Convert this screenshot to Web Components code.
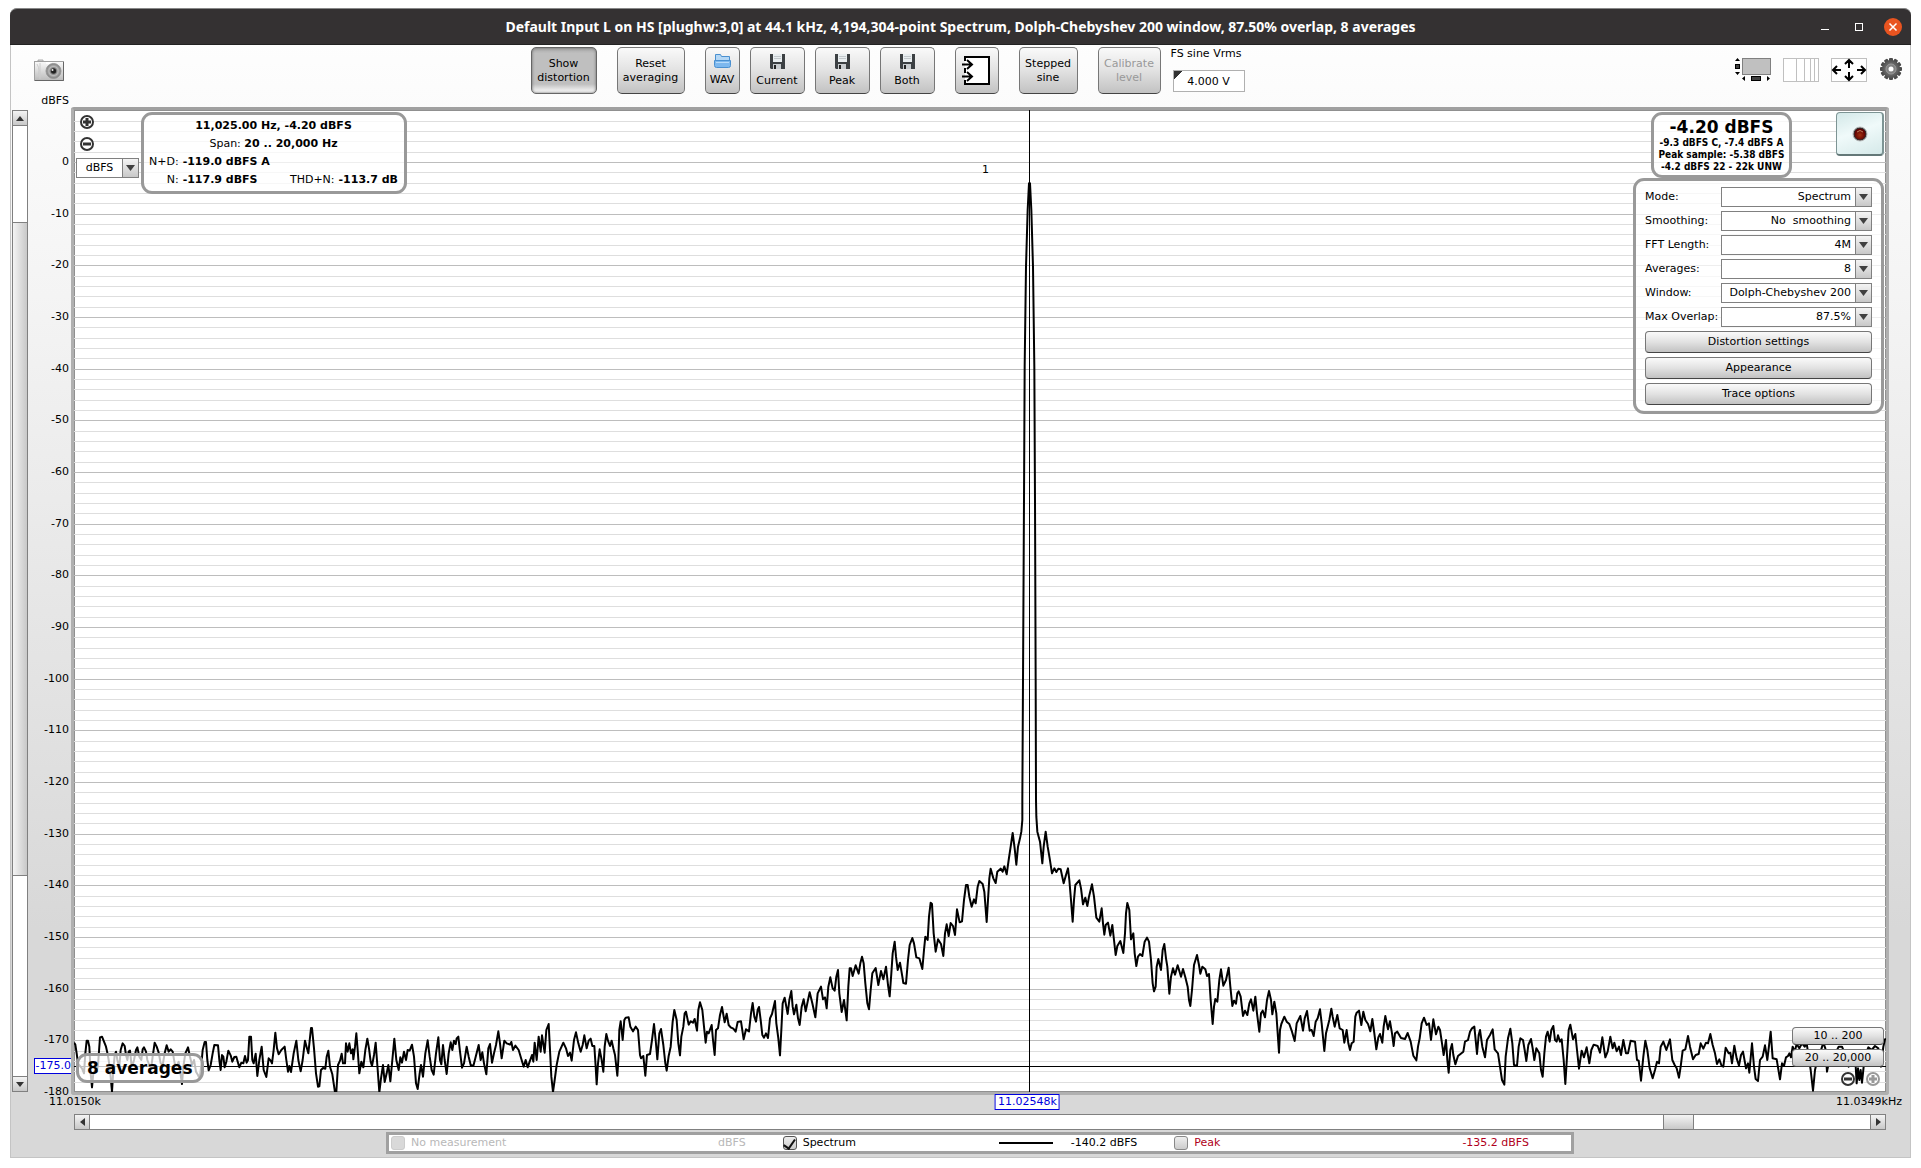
<!DOCTYPE html>
<html lang="en">
<head>
<meta charset="utf-8">
<title>Spectrum</title>
<style>
  html, body {
    margin: 0;
    height: 100%;
  }
  body {
    box-sizing: border-box;
    padding: 8px 10px 10px;
    background: #fff;
    color: #000;
    font: 11px/12px "DejaVu Sans", Verdana, sans-serif;
  }
</style>
</head>
<body>
<rta-window></rta-window>

<script>
// Rules that every shadow root needs
const BASE = `
  * { box-sizing: border-box; }
  :host { display: block; }
  button, select, input { font: inherit; color: inherit; margin: 0; }
  button { padding: 0; cursor: pointer; }
  svg { display: block; }
`;

const RAISED = `
  border: 1px solid #777;
  border-bottom-color: #444;
  background: linear-gradient(#fafafa, #e2e2e2 50%, #c2c2c2);
`;

class BaseElement extends HTMLElement {
  constructor() {
    super();
    this.attachShadow({ mode: "open" });
  }

  connectedCallback() {
    this.shadowRoot.innerHTML = `<style>${BASE}${this.styles()}</style>${this.markup()}`;
  }

  styles() { return ""; }
  markup() { return "<slot></slot>"; }
}

/* ---------- icons ---------- */

const gearTeeth = Array.from({ length: 12 }, (_, i) =>
  `<rect x="9" y="0" width="4" height="5" rx="1" transform="rotate(${i * 30} 11 11)"/>`).join("");

const ICONS = {
  camera: `<svg width="30" height="22" viewBox="0 0 30 22">
    <defs>
      <linearGradient id="cam" x1="0" y1="0" x2="0" y2="1"><stop offset="0" stop-color="#fafafa"/><stop offset="1" stop-color="#bbb"/></linearGradient>
      <radialGradient id="lens"><stop offset="0" stop-color="#222"/><stop offset=".3" stop-color="#555"/><stop offset=".6" stop-color="#bbb"/><stop offset="1" stop-color="#777"/></radialGradient>
    </defs>
    <path d="M4 2V1h5v2z" fill="#ddd" stroke="#aaa"/>
    <rect x=".5" y="2.5" width="29" height="19" fill="url(#cam)" stroke="#a0a0a0"/>
    <path d="M1 21.5H29.5V3" fill="none" stroke="#666"/>
    <path d="M3 5q4 7 0 13M6 4v16" fill="none" stroke="#ccc"/>
    <path d="M12 4h6" stroke="#fff" stroke-width="2"/>
    <circle cx="19.5" cy="12" r="7.5" fill="url(#lens)" stroke="#999"/>
    <circle cx="19.5" cy="12" r="2.5" fill="#222"/>
    <circle cx="18.5" cy="11" r="1" fill="#eee"/>
  </svg>`,
  folder: `<svg width="17" height="14" viewBox="0 0 17 14">
    <path d="M1.5 8V.5h5l1 2h8V8" fill="#b4d7f5" stroke="#4a90d0"/>
    <path d="M.5 6.5h16v5q0 2-2 2h-12q-2 0-2-2z" fill="#7db8ee" stroke="#4a90d0"/>
    <path d="M2 8.5h13" stroke="#b9dcfa"/>
  </svg>`,
  floppy: `<svg width="15" height="15" viewBox="0 0 15 15">
    <path d="M0 0h15v15H1l-1-1z" fill="#3c4043"/>
    <rect x="3" y="0" width="9" height="8" fill="#e9eef0"/>
    <path d="M4 2.5h7M4 4.5h7" stroke="#c2c8cc"/>
    <rect x="3" y="10" width="8" height="5" fill="#c9cdd0"/>
    <rect x="4" y="11" width="2" height="4" fill="#222"/>
  </svg>`,
  input: `<svg width="30" height="31" viewBox="0 0 30 31">
    <rect x="3" y="2" width="24" height="27" fill="#fff"/>
    <path d="M3 6V2h24v27H3v-4M3 13v5" fill="none" stroke="#000" stroke-width="2"/>
    <path d="M0 9.5h9M5 5l5 4.500L5 14M0 21.500h9M5 17l5 4.500L5 26" fill="none" stroke="#000" stroke-width="2"/>
  </svg>`,
  scrollbars: `<svg width="36" height="24" viewBox="0 0 36 24">
    <rect x="7.5" y=".5" width="28" height="16" fill="#c0c0c0" stroke="#808080"/>
    <path d="M0 3l2.500-3L5 3zM0 14l2.500 3L5 14zM10 18v5l-3-2.500zM32 18v5l3-2.500z"/>
    <rect x=".5" y="6.5" width="4" height="4" fill="#404040" stroke="#000"/>
    <rect x="16.5" y="18.5" width="9" height="4" fill="#404040" stroke="#000"/>
  </svg>`,
  grid: `<svg width="36" height="24" viewBox="0 0 36 24">
    <rect x=".5" y=".5" width="35" height="23" fill="#fff" stroke="#c0c0c0"/>
    <path d="M13.5 0v24M21.5 0v24M27.5 0v24M31.5 0v24" stroke="#c0c0c0"/>
  </svg>`,
  limits: `<svg width="36" height="24" viewBox="0 0 36 24">
    <rect x=".5" y=".5" width="35" height="23" fill="#fff" stroke="#c0c0c0"/>
    <path d="M10 12H3M6 8l-4 4 4 4M26 12h7M30 8l4 4-4 4M18 10V3M14 6l4-4 4 4M18 14v7M14 18l4 4 4-4" fill="none" stroke="#000" stroke-width="2"/>
  </svg>`,
  gear: `<svg width="23" height="22" viewBox="-1 0 23 22">
    <defs><radialGradient id="gear"><stop offset="0" stop-color="#aaa"/><stop offset=".6" stop-color="#6a6a6a"/><stop offset="1" stop-color="#555"/></radialGradient></defs>
    <g fill="#4c4c4c">${gearTeeth}</g>
    <circle cx="11" cy="11" r="8.5" fill="url(#gear)" stroke="#555"/>
    <circle cx="11" cy="11" r="5" fill="#808080" stroke="#999"/>
    <circle cx="11" cy="11" r="2.5" fill="#fff"/>
  </svg>`,
  plus: `<svg width="16" height="16" viewBox="0 0 16 16"><circle cx="8" cy="8" r="6" fill="#fff" stroke="currentColor" stroke-width="2"/><path d="M8 4v8M4 8h8" stroke="currentColor" stroke-width="3"/></svg>`,
  minus: `<svg width="16" height="16" viewBox="0 0 16 16"><circle cx="8" cy="8" r="6" fill="#fff" stroke="currentColor" stroke-width="2"/><path d="M4 8h8" stroke="currentColor" stroke-width="3"/></svg>`,
  up: `<svg width="8" height="5" viewBox="0 0 8 5"><path d="M0 5L4 0l4 5z" fill="#333"/></svg>`,
  down: `<svg width="8" height="5" viewBox="0 0 8 5"><path d="M0 0l4 5 4-5z" fill="#333"/></svg>`,
  left: `<svg width="5" height="8" viewBox="0 0 5 8"><path d="M5 0L0 4l5 4z" fill="#333"/></svg>`,
  right: `<svg width="5" height="8" viewBox="0 0 5 8"><path d="M0 0l5 4-5 4z" fill="#333"/></svg>`,
};

/* ---------- small controls ---------- */

// Icon without a frame, used on the toolbar and over the plot
class IconButton extends BaseElement {
  styles() {
    return `
      button { display: block; border: 0; background: none; }
    `;
  }
  markup() {
    return `<button type="button" aria-label="${this.getAttribute("label")}">${ICONS[this.getAttribute("icon")]}</button>`;
  }
}

class ToolButton extends BaseElement {
  styles() {
    return `
      button {
        ${RAISED}
        display: flex;
        flex-direction: column;
        align-items: center;
        justify-content: center;
        width: 100%;
        height: 47px;
        border-radius: 5px;
        line-height: 14px;
        text-align: center;
      }
      svg { margin-bottom: 5px; }
      svg:only-child { margin: 0; }
      :host([pressed]) button {
        border-color: #666;
        background: linear-gradient(#a8a8a8, #bfbfbf 12%, #bfbfbf 80%, #f4f4f4 96%);
        box-shadow: inset 0 0 3px #666;
      }
      button:disabled { color: #999; cursor: default; }
    `;
  }
  markup() {
    const icon = this.getAttribute("icon");
    const label = this.getAttribute("label");
    const text = this.textContent.trim() ? "<span><slot></slot></span>" : "";
    return `<button type="button" ${label ? `aria-label="${label}"` : ""}
      ${this.hasAttribute("pressed") ? 'aria-pressed="true"' : ""}
      ${this.hasAttribute("disabled") ? "disabled" : ""}>${icon ? ICONS[icon] : ""}${text}</button>`;
  }
}

class FlatButton extends BaseElement {
  styles() {
    return `
      button {
        ${RAISED}
        display: block;
        width: 100%;
        height: var(--height, 22px);
        border-radius: 4px;
        text-align: center;
      }
    `;
  }
  markup() { return `<button type="button"><slot></slot></button>`; }
}

// Drop-down list, with a label before it when the "name" attribute is set
class DropDown extends BaseElement {
  styles() {
    return `
      :host { display: flex; align-items: center; }
      label { flex: 1; white-space: nowrap; }
      .box {
        display: grid;
        width: var(--box, 151px);
        height: 20px;
        border: 1px solid #808080;
        background: #fff;
      }
      select, .arrow { grid-area: 1 / 1; }
      select {
        appearance: none;
        width: 100%;
        border: 0;
        padding: 0 20px 0 0;
        background: none;
        text-align: right;
        text-align-last: right;
      }
      :host(:not([name])) select {
        padding: 0 16px 0 0;
        text-align: center;
        text-align-last: center;
      }
      .arrow {
        justify-self: end;
        display: grid;
        place-items: center;
        width: 16px;
        border-left: 1px solid #808080;
        background: linear-gradient(#f4f4f4, #c8c8c8);
        pointer-events: none;
      }
    `;
  }
  markup() {
    const name = this.getAttribute("name");
    return `
      ${name ? `<label for="list">${name}:</label>` : ""}
      <div class="box">
        <select id="list" ${name ? "" : 'aria-label="Units"'}><option>${this.getAttribute("value")}</option></select>
        <span class="arrow"><svg width="9" height="6" viewBox="0 0 9 6"><path d="M0 0h9L4.500 6z" fill="#404040"/></svg></span>
      </div>
    `;
  }
}

// before, size and after are the shares of the track
class ScrollBar extends BaseElement {
  styles() {
    return `
      :host { display: flex; border: 1px solid #808080; background: #fff; }
      :host([vertical]) { flex-direction: column; }
      button {
        display: grid;
        place-items: center;
        flex: 0 0 15px;
        border: 0;
        background: linear-gradient(#f4f4f4, #c8c8c8);
      }
      button:first-of-type { border-right: 1px solid #808080; }
      button:last-of-type { border-left: 1px solid #808080; }
      :host([vertical]) button:first-of-type { border-right: 0; border-bottom: 1px solid #808080; }
      :host([vertical]) button:last-of-type { border-left: 0; border-top: 1px solid #808080; }
      .thumb {
        border: solid #808080;
        border-width: 0 1px;
        background: linear-gradient(#f4f4f4, #c8c8c8);
      }
      :host([vertical]) .thumb {
        border-width: 1px 0;
        background: linear-gradient(90deg, #f4f4f4, #c8c8c8);
      }
    `;
  }
  markup() {
    const vertical = this.hasAttribute("vertical");
    const [before, size, after] = this.getAttribute("track").split(" ");
    return `
      <button type="button" aria-label="Scroll back">${vertical ? ICONS.up : ICONS.left}</button>
      <div style="flex: ${before}"></div>
      <div class="thumb" style="flex: ${size}"></div>
      <div style="flex: ${after}"></div>
      <button type="button" aria-label="Scroll forward">${vertical ? ICONS.down : ICONS.right}</button>
    `;
  }
}

/* ---------- window frame ---------- */

class TitleBar extends BaseElement {
  styles() {
    return `
      :host {
        display: grid;
        grid-template-columns: 1fr auto 1fr;
        align-items: center;
        height: 37px;
        padding: 0 9px;
        border-top: 1px solid #888;
        border-bottom: 1px solid #222;
        border-radius: 7px 7px 0 0;
        background: #343132;
        color: #fff;
      }
      h1 { grid-column: 2; margin: 0; font: bold 14px/20px "Noto Sans", "Open Sans", sans-serif; white-space: nowrap; }
      .buttons { display: flex; justify-content: flex-end; gap: 16px; }
      button { border: 0; background: none; }
    `;
  }
  markup() {
    return `
      <h1><slot></slot></h1>
      <div class="buttons">
        <button type="button" aria-label="Minimise"><svg width="18" height="18"><path d="M5 11.500h8" stroke="#fff"/></svg></button>
        <button type="button" aria-label="Maximise"><svg width="18" height="18"><rect x="5.5" y="5.5" width="7" height="7" fill="none" stroke="#fff"/></svg></button>
        <button type="button" aria-label="Close"><svg width="18" height="18"><circle cx="9" cy="9" r="9" fill="#e95420"/><path d="M5.500 5.500l7 7M12.500 5.500l-7 7" stroke="#fff" stroke-width="1.5"/></svg></button>
      </div>
    `;
  }
}

class ToolBar extends BaseElement {
  styles() {
    return `
      :host { display: flex; height: 62px; padding: 2px 9px 0 0; }
      .left {
        display: flex;
        flex-direction: column;
        align-items: flex-end;
        width: 59px;
        padding-top: 12px;
        gap: 14px;
      }
      .left icon-button { margin-right: 5px; }
      .tools { display: flex; align-items: flex-start; gap: 10px; margin: 0 auto; padding-right: 29px; }
      .wide { margin-left: 10px; }
      .field { display: flex; flex-direction: column; gap: 10px; padding-top: 1px; }
      input {
        width: 72px;
        height: 22px;
        margin-left: 2px;
        border: 1px solid #b0b0b0;
        background: linear-gradient(135deg, #333 6px, #fff 6px);
        text-align: center;
      }
      .right { display: flex; gap: 12px; padding-top: 11px; }
    `;
  }
  markup() {
    return `
      <div class="left">
        <icon-button icon="camera" label="Capture"></icon-button>
        <span>dBFS</span>
      </div>
      <div class="tools">
        <tool-button pressed style="width: 66px">Show<br>distortion</tool-button>
        <tool-button class="wide" style="width: 68px">Reset<br>averaging</tool-button>
        <tool-button class="wide" icon="folder" style="width: 35px">WAV</tool-button>
        <tool-button icon="floppy" style="width: 55px">Current</tool-button>
        <tool-button icon="floppy" style="width: 55px">Peak</tool-button>
        <tool-button icon="floppy" style="width: 55px">Both</tool-button>
        <tool-button class="wide" icon="input" label="Input" style="width: 44px"></tool-button>
        <tool-button class="wide" style="width: 59px">Stepped<br>sine</tool-button>
        <tool-button class="wide" disabled style="width: 63px">Calibrate<br>level</tool-button>
        <div class="field">
          <label for="vrms">FS sine Vrms</label>
          <input id="vrms" type="text" value="4.000 V">
        </div>
      </div>
      <div class="right">
        <icon-button icon="scrollbars" label="Scrollbars"></icon-button>
        <icon-button icon="grid" label="Frequency axis"></icon-button>
        <icon-button icon="limits" label="Limits"></icon-button>
        <icon-button icon="gear" label="Settings"></icon-button>
      </div>
    `;
  }
}

/* ---------- panels over the plot ---------- */

// Rounded translucent frame
class FloatPanel extends BaseElement {
  styles() {
    return `
      :host {
        border: 3px solid #999;
        border-radius: 11px;
        background: rgba(255, 255, 255, .75);
      }
    `;
  }
}

class DistortionInfo extends BaseElement {
  styles() {
    return `
      .rows {
        display: grid;
        grid-template-columns: auto 1fr auto auto;
        column-gap: 4px;
        width: 260px;
        padding: 2px 6px 2px 5px;
        line-height: 18px;
        white-space: nowrap;
      }
      .center { grid-column: 1 / -1; text-align: center; }
      .label { text-align: right; }
      .rest { grid-column: 2 / -1; }
    `;
  }
  markup() {
    return `
      <float-panel>
        <div class="rows">
          <b class="center">11,025.00 Hz, -4.20 dBFS</b>
          <span class="center">Span: <b>20 .. 20,000 Hz</b></span>
          <span class="label">N+D:</span><b class="rest">-119.0 dBFS A</b>
          <span class="label">N:</span><b>-117.9 dBFS</b>
          <span class="label">THD+N:</span><b>-113.7 dB</b>
        </div>
      </float-panel>
    `;
  }
}

class LevelInfo extends BaseElement {
  styles() {
    return `
      .rows {
        width: 135px;
        padding: 2px 0;
        font: bold 10px/12px "DejaVu Sans Condensed", "DejaVu Sans", sans-serif;
        text-align: center;
        white-space: nowrap;
      }
      .level { font: bold 17px/20px "DejaVu Sans", sans-serif; }
    `;
  }
  markup() {
    return `
      <float-panel>
        <div class="rows">
          <div class="level">-4.20 dBFS</div>
          <div>-9.3 dBFS C, -7.4 dBFS A</div>
          <div>Peak sample: -5.38 dBFS</div>
          <div>-4.2 dBFS 22 - 22k UNW</div>
        </div>
      </float-panel>
    `;
  }
}

class SettingsPanel extends BaseElement {
  styles() {
    return `
      .rows { display: flex; flex-direction: column; gap: 4px; width: 245px; padding: 6px 9px; }
    `;
  }
  markup() {
    return `
      <float-panel>
        <div class="rows">
          <drop-down name="Mode" value="Spectrum"></drop-down>
          <drop-down name="Smoothing" value="No&nbsp; smoothing"></drop-down>
          <drop-down name="FFT Length" value="4M"></drop-down>
          <drop-down name="Averages" value="8"></drop-down>
          <drop-down name="Window" value="Dolph-Chebyshev 200"></drop-down>
          <drop-down name="Max Overlap" value="87.5%"></drop-down>
          <flat-button>Distortion settings</flat-button>
          <flat-button>Appearance</flat-button>
          <flat-button>Trace options</flat-button>
        </div>
      </float-panel>
    `;
  }
}

class RecordButton extends BaseElement {
  styles() {
    return `
      button {
        display: grid;
        place-items: center;
        width: 48px;
        height: 44px;
        border: 1px solid #7d9494;
        border-bottom: 2px solid #647878;
        border-right: 2px solid #7d9494;
        border-radius: 4px;
        background: linear-gradient(160deg, #d3e8e8, #f0fafa 45%, #d5e9e9);
      }
    `;
  }
  markup() {
    return `
      <button type="button" aria-label="Record">
        <svg width="16" height="16" viewBox="0 0 16 16">
          <defs><radialGradient id="led" cy=".6"><stop offset="0" stop-color="#a03010"/><stop offset="1" stop-color="#600000"/></radialGradient></defs>
          <circle cx="8" cy="8" r="7" fill="#333" stroke="#bbb"/>
          <circle cx="8" cy="8" r="5.5" fill="url(#led)"/>
          <path d="M5 6q3-3 6 0" fill="none" stroke="#c08060"/>
        </svg>
      </button>
    `;
  }
}

/* ---------- plot ---------- */

// The drawing is 5436 x 2946 units: 15.5 units for each dB, with 0 dBFS at 157.
const PLOT_W = 5436;
const PLOT_H = 2946;
const levelY = (db) => 157 - db * 15.5;

// Trace in blocks; the points of a block are relative to its origin.
const TRACE = [
  { x: -42, y: 2700, points: `
    42,98 46,104 50,130 54,160 60,168 66,175 72,190 76,130 80,92 84,92 88,110 92,190 96,232 100,190 106,180 110,185 114,165
    120,82 126,80 132,95 138,110 142,128 146,150 150,180 156,245 160,180 164,135 168,125 172,150 178,170 182,120 188,100
    194,108 198,135 202,150 206,125 210,122 214,160 218,165 222,150 228,120 232,112 238,140 244,150 248,118 252,112 258,125
    262,150 268,165 274,170 278,140 284,98 290,110 296,128 302,160 308,165 314,130 320,106 326,125 332,118 338,125 344,160
    350,170 356,155 360,180 366,222 370,170 376,130 384,112 390,140 396,165 402,150 408,185 414,195 419,206 424,165 428,120
    434,96 438,96 442,150 446,181 452,165 458,130 463,105 474,106 478,150 482,180 486,135 490,140 494,172 499,155 505,122
    512,136 517,155 523,141 529,140 534,158 538,172 544,158 550,160 555,138 560,158 564,150 568,80 573,80 577,150 581,160
    587,131 592,198 598,150 605,110 611,180 619,201 626,145 632,152 636,160 641,120 646,68 651,115 656,133 664,120 674,110
    679,150 684,185 688,168 693,186 701,130 709,92 715,150 722,184 728,150 735,92 739,108 745,130 753,54 756,54 762,115
    768,190 774,230 778,229 783,180 789,174 796,176 800,140 805,122 810,170 817,193 825,247 829,246 834,165 840,152 845,131
    849,160 855,160 858,100 863,125 868,100 873,130 878,118 880,148 885,110 889,70 893,120 898,190 904,155 910,172 916,120
    922,86 927,115 932,155 936,168 942,135 947,98 952,165 958,247 963,205 969,165 974,216 980,190 985,165 991,214 997,150
    1003,86 1009,150 1016,180 1021,142 1026,158 1032,125 1038,150 1043,120 1049,122 1056,104 1062,140 1068,220 1073,237
    1079,190 1083,165 1089,200 1096,130 1103,91 1109,140 1115,180 1121,194 1128,130 1135,82 1140,150 1144,163 1149,105
    1154,150 1160,192 1166,130 1172,97 1177,120 1182,92 1187,102 1190,85 1195,80 1200,125 1206,173 1212,160 1220,110
    1226,140 1232,165 1240,168 1246,145 1256,105 1262,150 1267,127 1272,160 1279,193 1285,115 1290,102 1296,158 1302,130
    1308,105 1315,64 1320,100 1325,145 1333,92 1340,100 1350,104 1354,96 1359,120 1366,107 1376,120 1382,140 1391,170
    1397,150 1403,172 1409,155 1416,135 1420,155 1424,98 1430,150 1436,80 1442,125 1446,76 1454,128 1459,60 1466,42
    1470,120 1474,200 1479,246 1484,210 1490,165 1498,125 1510,98 1518,115 1524,138 1530,128` },
  { x: 1458, y: 2070, points: `
    35,782 42,720 48,697 55,730 62,755 68,735 73,706 80,745 86,722 92,716 97,738 103,738 107,800 110,853 114,790 119,748
    125,780 130,815 134,740 139,702 144,722 150,738 155,722 160,745 165,765 172,827 175,780 178,690 182,664 188,720 193,660
    197,653 206,652 211,680 219,694 227,680 234,690 240,765 243,775 250,768 256,827 261,765 270,762 276,720 282,672 287,720
    292,778 298,700 303,687 310,735 316,790 320,812 326,768 332,740 338,665 343,630 350,660 355,730 360,766 364,710 370,680
    374,640 378,635 386,674 392,664 399,668 404,657 411,692 415,630 420,607 427,630 432,680 437,728 441,695 446,700 455,675
    459,720 464,765 468,690 474,685 480,645 486,621 494,667 500,641 506,675 512,682 520,686 527,695 533,666 543,664 551,718
    558,688 567,694 573,640 578,609 583,650 588,665 593,630 597,621 602,660 607,705 612,713 618,700 624,714 630,655 636,642
    645,603 649,670 655,715 660,766 664,690 668,610 674,593 683,642 688,600 694,573 698,620 702,643 709,614 714,655 719,675
    725,620 731,598 737,634 743,605 749,577 757,610 766,652 773,580 783,560 789,598 795,592 800,625 805,560 811,532 818,565
    824,572 829,530 834,510 838,580 845,636 852,600 860,661 865,560 869,505 873,505 878,528 887,496 896,521 901,490 906,470
    911,490 916,550 922,610 927,628 932,570 937,520 947,504 955,555 963,513 970,538 978,500 984,555 989,589 994,520 998,460
    1004,425 1008,470 1013,510 1020,488 1027,530 1030,549 1038,551 1044,480 1049,435 1057,414 1062,430 1069,472 1078,475
    1087,507 1092,450 1096,410 1103,420 1107,350 1112,308 1116,312 1121,400 1127,455 1134,418 1143,432 1150,468 1155,400
    1160,373 1166,408 1172,369 1179,378 1185,405 1191,328 1199,367 1206,364 1212,300 1218,255 1223,255 1228,290 1235,320
    1242,298 1247,310 1253,260 1258,243 1268,252 1273,275 1280,366 1284,300 1288,235 1292,206 1300,235 1307,249 1312,215
    1322,206 1328,215 1333,199 1340,223 1346,180 1352,140 1358,99 1364,145 1369,194 1374,140 1380,115 1384,95 1387,60
    1387,0 1389,-360 1392,-900 1394,-1300 1398,-1600 1403,-1770 1407,-1850 1410,-1850 1414,-1770 1419,-1600 1423,-1300
    1425,-900 1427,-360 1428,0` },
  { x: 2778, y: 2070, points: `
    109,50 112,95 120,125 127,190 131,140 137,95 143,140 149,175 156,220 163,205 169,216 175,206 182,208 191,250 198,225
    204,205 208,240 213,300 218,365 222,300 226,255 238,241 243,265 249,313 256,293 262,318 267,290 276,253 282,290 289,353
    298,365 305,325 309,370 313,404 317,375 324,368 331,407 337,375 342,420 347,465 352,438 361,423 370,459 375,400 378,340
    382,309 388,330 393,418 400,400 404,460 409,498 414,470 420,462 427,468 434,425 441,413 447,425 453,480 458,550 462,574
    467,560 470,500 475,477 483,510 488,450 493,432 498,475 502,500 508,581 513,530 519,505 525,524 533,496 543,530 549,507
    556,532 563,560 567,600 571,618 576,570 582,495 591,465 597,495 601,521 607,500 616,508 621,528 627,522 632,600 638,672
    642,620 646,597 652,605 658,540 663,508 670,557 678,540 686,503 691,560 697,618 702,602 708,611 712,580 716,574 722,590
    729,648 735,632 742,645 748,610 753,598 760,632 766,590 771,640 778,695 783,640 788,632 795,652 801,600 807,573 813,600
    817,643 823,605 829,640 837,758 840,690 844,672 853,650 860,665 868,672 876,695 884,723 890,670 901,648 909,692 914,655
    921,633 926,670 929,692 935,690 941,708 947,665 953,655 960,628 965,670 973,753 978,700 983,680 988,660 994,626 998,650
    1004,680 1012,645 1019,685 1028,690 1033,728 1040,690 1045,730 1050,750 1055,730 1061,725 1066,650 1070,638 1077,632
    1084,675 1090,635 1096,660 1104,672 1111,694 1117,657 1123,700 1129,748 1135,712 1140,702 1147,728 1151,680 1156,648
    1164,688 1170,664 1176,700 1181,738 1185,700 1192,695 1203,714 1215,717 1223,699 1232,725 1240,767 1249,781 1254,740
    1259,715 1265,670 1272,653 1280,675 1287,670 1293,720 1300,658 1308,703 1315,680` },
  { x: 4098, y: 2670, points: `
    0,90 6,130 11,165 18,120 22,180 26,218 31,150 36,132 40,165 46,193 54,168 70,155 75,125 84,120 90,95 96,85 103,80
    108,130 111,162 116,105 120,90 127,140 135,172 141,120 150,105 158,88 164,148 174,160 180,200 186,240 193,254 197,170
    204,115 211,86 217,130 222,195 231,198 236,140 241,115 249,120 254,150 259,183 265,135 273,117 278,145 283,180 289,145
    298,160 303,210 308,230 313,160 318,110 323,95 329,125 334,90 340,78 345,120 350,125 354,106 360,125 365,118 371,180
    376,252 381,170 386,90 391,74 399,118 406,102 411,150 417,206 425,152 432,172 440,142 448,190 454,150 461,134 473,138
    480,158 487,112 496,172 503,155 511,110 518,145 523,128 530,154 537,140 543,165 550,120 558,160 564,160 572,122 585,125
    591,180 596,182 603,242 610,170 616,122 622,150 629,205 638,235 645,210 651,185 657,190 662,140 670,125 679,150 690,118
    697,180 704,195 710,205 717,233 722,200 728,152 736,148 744,108 750,140 759,178 767,165 776,162 782,130 790,146 798,128
    804,130 811,102 818,135 825,160 831,192 838,178 845,198 850,200 857,143 866,160 871,158 876,190 883,137 890,175 897,197
    903,165 909,155 918,205 924,190 928,218 936,130 942,200 947,237 954,243 960,180 968,170 975,136 982,180 992,95 998,175
    1010,178 1020,238 1026,190 1032,198 1038,172 1044,168 1048,160 1053,172 1058,140 1064,155 1070,132 1078,145 1086,130
    1094,140 1100,130 1106,170 1112,210 1119,272 1125,210 1132,180 1140,160 1150,128 1156,145 1161,215 1168,180 1176,165
    1186,160 1196,140 1206,140 1216,165 1226,200 1236,190 1246,180 1250,250 1254,205 1258,240 1262,210 1266,248 1272,190
    1278,160 1285,142 1295,150 1305,138 1315,145 1323,200 1330,140 1335,118 1338,118` },
];

class SpectrumGraph extends BaseElement {
  styles() {
    return `
      svg { width: 100%; height: 100%; }
      path, polyline { fill: none; vector-effect: non-scaling-stroke; }
      .minor { stroke: #dedede; shape-rendering: crispEdges; }
      .major { stroke: #bdbdbd; shape-rendering: crispEdges; }
      .cursor { stroke: #000; shape-rendering: crispEdges; }
      .trace { stroke: #000; stroke-width: 2; stroke-linejoin: round; }
    `;
  }
  markup() {
    let minor = "";
    let major = "";
    for (let db = 8; db > -180; db -= 2) {
      const line = `M0 ${levelY(db)}H${PLOT_W}`;
      if (db % 10 === 0) major += line;
      else minor += line;
    }
    const points = TRACE.flatMap((block) => block.points.trim().split(/\s+/).map((p) => {
      const [x, y] = p.split(",").map(Number);
      return `${block.x + x},${block.y + y}`;
    })).join(" ");
    return `
      <svg viewBox="0 0 ${PLOT_W} ${PLOT_H}" preserveAspectRatio="none" role="img" aria-label="Spectrum">
        <path class="minor" d="${minor}"/>
        <path class="major" d="${major}"/>
        <polyline class="trace" points="${points}"/>
        <path class="cursor" d="M0 ${levelY(-175)}H${PLOT_W}M2866 0V${PLOT_H}"/>
      </svg>
    `;
  }
}

class SpectrumPlot extends BaseElement {
  styles() {
    return `
      :host {
        position: relative;
        border: 3px solid #b0b0b0;
        border-top-color: #a0a0a0;
        border-radius: 3px;
        background: #fff;
        box-shadow: inset 0 0 0 1px #909090;
      }
      spectrum-graph { position: absolute; inset: 0; }
      .overlay { position: absolute; display: flex; }
      .top-left { top: 2px; left: 2px; gap: 2px; align-items: flex-start; }
      .zoom { display: flex; flex-direction: column; gap: 6px; width: 63px; padding-top: 2px; }
      .zoom icon-button { margin-left: 3px; color: #333; }
      .zoom drop-down { --box: 63px; }
      .top-right { top: 2px; right: 2px; flex-direction: column; align-items: flex-end; }
      .status { display: flex; align-items: flex-start; gap: 44px; }
      .bottom-left { left: 2px; bottom: 9px; }
      .averages { padding: 0 8px; font: bold 17px/24px "DejaVu Sans", sans-serif; }
      .bottom-right { right: 2px; bottom: 5px; flex-direction: column; gap: 4px; width: 92px; }
      .bottom-right flat-button { --height: 18px; }
      .zoom-x { display: flex; justify-content: flex-end; gap: 9px; padding-right: 3px; color: #333; }
      .zoom-x .off { color: #999; }
      .marker { left: 50%; top: 54px; padding-left: 2px; }
    `;
  }
  markup() {
    return `
      <spectrum-graph></spectrum-graph>
      <div class="overlay marker"><span>1</span></div>
      <div class="overlay top-left">
        <div class="zoom">
          <icon-button icon="plus" label="Zoom in vertically"></icon-button>
          <icon-button icon="minus" label="Zoom out vertically"></icon-button>
          <drop-down value="dBFS"></drop-down>
        </div>
        <distortion-info></distortion-info>
      </div>
      <div class="overlay top-right">
        <div class="status">
          <level-info></level-info>
          <record-button></record-button>
        </div>
        <settings-panel></settings-panel>
      </div>
      <div class="overlay bottom-left">
        <float-panel><div class="averages">8 averages</div></float-panel>
      </div>
      <div class="overlay bottom-right">
        <flat-button>10 .. 200</flat-button>
        <flat-button>20 .. 20,000</flat-button>
        <div class="zoom-x">
          <icon-button icon="minus" label="Zoom out horizontally"></icon-button>
          <icon-button class="off" icon="plus" label="Zoom in horizontally"></icon-button>
        </div>
      </div>
    `;
  }
}

class LevelAxis extends BaseElement {
  styles() {
    return `
      :host {
        position: relative;
        display: flex;
        flex-direction: column;
        justify-content: space-between;
        padding: 49px 2px 0 0;
        margin-bottom: -3px;
        text-align: right;
      }
      .cursor {
        position: absolute;
        right: -2px;
        bottom: 24px;
        border: 1px solid #00d;
        padding: 1px;
        background: #fff;
        color: #00d;
      }
    `;
  }
  markup() {
    let labels = "";
    for (let db = 0; db >= -180; db -= 10) labels += `<span>${db}</span>`;
    return `${labels}<span class="cursor">-175.0</span>`;
  }
}

class FrequencyAxis extends BaseElement {
  styles() {
    return `
      :host {
        position: relative;
        display: flex;
        justify-content: space-between;
        height: 19px;
        margin: 0 -13px 0 -22px;
        padding-top: 1px;
      }
      .cursor {
        position: absolute;
        left: 52.8%;
        transform: translateX(-50%);
        top: -1px;
        border: 1px solid #00d;
        padding: 1px 2px;
        background: #fff;
        color: #00d;
      }
    `;
  }
  markup() {
    return `
      <span>11.0150k</span>
      <span class="cursor">11.02548k</span>
      <span>11.0349kHz</span>
    `;
  }
}

/* ---------- legend ---------- */

class LegendItem extends BaseElement {
  styles() {
    return `
      :host { display: flex; align-items: center; color: var(--ink, #000); }
      label { display: flex; align-items: center; gap: 6px; flex: 1; }
      input {
        appearance: none;
        display: grid;
        place-items: center;
        width: 14px;
        height: 14px;
        border: 1px solid #888;
        border-radius: 3px;
        background: linear-gradient(#eee, #ccc);
      }
      input:checked { border-color: #555; }
      input:checked::before {
        content: "";
        width: 5px;
        height: 10px;
        border: solid #111;
        border-width: 0 2px 2px 0;
        transform: rotate(35deg);
      }
      input:disabled { border-color: #ccc; background: #d9d9d9; }
      .line { width: 54px; height: 2px; margin-right: 18px; background: currentColor; }
      .value { margin-right: 37px; }
    `;
  }
  markup() {
    return `
      <label>
        <input type="checkbox" ${this.hasAttribute("checked") ? "checked" : ""} ${this.hasAttribute("disabled") ? "disabled" : ""}>
        <slot></slot>
      </label>
      ${this.hasAttribute("checked") ? '<span class="line"></span>' : ""}
      <span class="value">${this.getAttribute("value")}</span>
    `;
  }
}

class TraceLegend extends BaseElement {
  styles() {
    return `
      :host {
        display: grid;
        grid-template-columns: repeat(3, 1fr);
        width: 66%;
        max-width: 1188px;
        height: 22px;
        padding: 0 5px 0 2px;
        border: 3px solid #a0a0a0;
        background: #fff;
      }
    `;
  }
  markup() {
    return `
      <legend-item disabled value="dBFS" style="--ink: #b8b8b8">No measurement</legend-item>
      <legend-item checked value="-140.2 dBFS">Spectrum</legend-item>
      <legend-item value="-135.2 dBFS" style="--ink: #b00020">Peak</legend-item>
    `;
  }
}

class RtaWindow extends BaseElement {
  styles() {
    return `
      :host {
        display: flex;
        flex-direction: column;
        height: 100%;
        border-radius: 7px 7px 0 0;
        background: linear-gradient(#fff, #f4f4f4 25%, #d8d8d8 80%);
        box-shadow: inset 0 0 0 1px #c4c4c4;
      }
      .graph {
        flex: 1;
        display: grid;
        grid-template-columns: 16px 43px minmax(0, 1fr);
        grid-template-rows: minmax(0, 1fr) auto auto;
        padding: 0 22px 0 2px;
      }
      .level { grid-area: 1 / 1; margin: 3px 0; }
      frequency-axis { grid-column: 3; }
      .frequency { grid-column: 3; height: 16px; margin: 0 3px; }
      footer { display: flex; justify-content: center; padding: 2px 22px 4px 61px; }
    `;
  }
  markup() {
    return `
      <title-bar>Default Input L on HS [plughw:3,0] at 44.1 kHz, 4,194,304-point Spectrum, Dolph-Chebyshev 200 window, 87.50% overlap, 8 averages</title-bar>
      <tool-bar></tool-bar>
      <div class="graph">
        <scroll-bar class="level" vertical track="96 654 200"></scroll-bar>
        <level-axis></level-axis>
        <spectrum-plot></spectrum-plot>
        <frequency-axis></frequency-axis>
        <scroll-bar class="frequency" track="1575 29 176"></scroll-bar>
      </div>
      <footer><trace-legend></trace-legend></footer>
    `;
  }
}

customElements.define("icon-button", IconButton);
customElements.define("tool-button", ToolButton);
customElements.define("flat-button", FlatButton);
customElements.define("drop-down", DropDown);
customElements.define("scroll-bar", ScrollBar);
customElements.define("title-bar", TitleBar);
customElements.define("tool-bar", ToolBar);
customElements.define("float-panel", FloatPanel);
customElements.define("distortion-info", DistortionInfo);
customElements.define("level-info", LevelInfo);
customElements.define("settings-panel", SettingsPanel);
customElements.define("record-button", RecordButton);
customElements.define("spectrum-graph", SpectrumGraph);
customElements.define("spectrum-plot", SpectrumPlot);
customElements.define("level-axis", LevelAxis);
customElements.define("frequency-axis", FrequencyAxis);
customElements.define("legend-item", LegendItem);
customElements.define("trace-legend", TraceLegend);
customElements.define("rta-window", RtaWindow);
</script>
</body>
</html>
